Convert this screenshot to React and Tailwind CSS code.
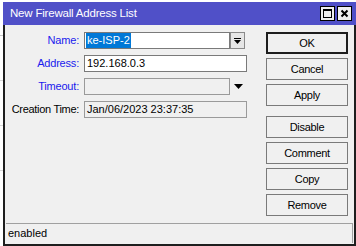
export default function App() {
  const buttons = [
    { label: 'OK', primary: true },
    { label: 'Cancel' },
    { label: 'Apply' },
    { label: 'Disable', gap: true },
    { label: 'Comment' },
    { label: 'Copy' },
    { label: 'Remove' },
  ];

  return (
    <div className="w-[356px] h-[246px] bg-white flex overflow-hidden font-['Liberation_Sans',Arial,sans-serif] text-[11px] text-black">
      {/* strip of the window behind */}
      <div className="w-[3px] flex flex-col pt-[35px] gap-[44px]">
        <div className="h-px bg-[#c8c8c8]" />
        <div className="h-px bg-[#d8d8d8]" />
        <div className="h-px bg-[#d8d8d8]" />
        <div className="h-px bg-[#d8d8d8]" />
      </div>

      <div className="flex-1 flex flex-col pt-[2px]">
        <div className="h-[23px] bg-[#5050c8] flex items-center pl-[7px] pr-[4px]">
          <span className="text-white text-[11.5px] tracking-[-0.2px] flex-1">New Firewall Address List</span>
          <div className="flex gap-[2px]">
            <div className="w-[15px] h-[15px] bg-[#f0f0f0] border border-black flex items-center justify-center">
              <div className="w-[9px] h-[9px] border border-black border-t-2" />
            </div>
            <div className="w-[15px] h-[15px] bg-[#f0f0f0] border border-black flex items-center justify-center">
              <svg width="9" height="9" viewBox="0 0 9 9">
                <path d="M1.5 1.5 L7.5 7.5 M7.5 1.5 L1.5 7.5" stroke="black" strokeWidth="2" />
              </svg>
            </div>
          </div>
        </div>

        <div className="flex-1 bg-[#f0f0f0] border-l-2 border-r-2 border-b-2 border-[#1e1e1e] flex flex-col">
          <div className="flex-1 flex pt-[7px]">
            <div className="flex-1 flex flex-col gap-[6px]">
              <div className="flex items-center h-[17px]">
                <span className="w-[75px] text-right pr-[1px] whitespace-nowrap tracking-[-0.2px] text-[#1a1aee]">Name:</span>
                <div className="ml-[4px] w-[146px] h-[17px] bg-white border border-[#7a7a7a] flex items-center px-[1px]">
                  <span className="bg-[#0078d7] text-white px-[1px] leading-[15px]">ke-ISP-2</span>
                </div>
                <div className="w-[15px] h-[17px] bg-[#e6e6e6] border border-[#8a8a8a] flex flex-col items-center justify-center">
                  <div className="w-[7px] h-px bg-black mb-px" />
                  <svg width="7" height="4" viewBox="0 0 7 4">
                    <path d="M0 0 H7 L3.5 4 Z" fill="black" />
                  </svg>
                </div>
              </div>
              <div className="flex items-center h-[17px]">
                <span className="w-[75px] text-right pr-[1px] whitespace-nowrap tracking-[-0.2px] text-[#1a1aee]">Address:</span>
                <div className="ml-[4px] w-[163px] h-[17px] bg-white border border-[#7a7a7a] flex items-center px-[2px]">
                  192.168.0.3
                </div>
              </div>
              <div className="flex items-center h-[17px]">
                <span className="w-[75px] text-right pr-[1px] whitespace-nowrap tracking-[-0.2px] text-[#1a1aee]">Timeout:</span>
                <div className="ml-[4px] w-[146px] h-[17px] bg-[#f0f0f0] border border-[#9a9a9a]" />
                <div className="w-[17px] flex justify-center">
                  <svg width="9" height="5" viewBox="0 0 9 5">
                    <path d="M0 0 H9 L4.5 5 Z" fill="black" />
                  </svg>
                </div>
              </div>
              <div className="flex items-center h-[17px]">
                <span className="w-[75px] text-right pr-[1px] whitespace-nowrap tracking-[-0.3px]">Creation Time:</span>
                <div className="ml-[4px] w-[163px] h-[17px] bg-[#f0f0f0] border border-[#9a9a9a] flex items-center px-[2px] whitespace-nowrap">
                  Jan/06/2023 23:37:35
                </div>
              </div>
            </div>

            <div className="w-[82px] mr-[6px] flex flex-col gap-[4px]">
              {buttons.map((b) => (
                <div
                  key={b.label}
                  className={
                    'h-[22px] flex items-center justify-center bg-[#f0f0f0] tracking-[-0.3px] ' +
                    (b.primary ? 'border-2 border-[#1e1e1e] ' : 'border border-[#7a7a7a] ') +
                    (b.gap ? 'mt-[6px]' : '')
                  }
                >
                  {b.label}
                </div>
              ))}
            </div>
          </div>

          <div className="h-[20px] mx-[1px] mb-[1px] border-t border-r border-[#a0a0a0] flex items-center px-[2px]">
            enabled
          </div>
        </div>
      </div>
    </div>
  );
}
